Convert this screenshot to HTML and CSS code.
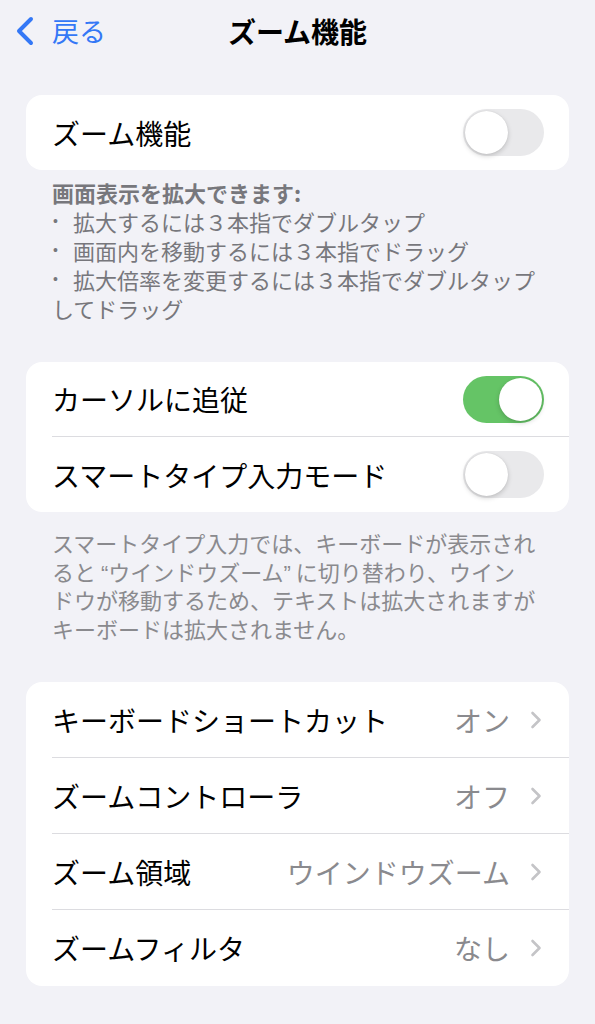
FILE: index.html
```html
<!DOCTYPE html>
<html lang="ja">
<head>
    <meta charset="utf-8">
    <title>ズーム機能</title>
    <link rel="stylesheet" href="styles.css">
</head>
<body>
    <header class="nav">
        <a class="back" href="#">
            <svg class="back-icon" width="20" height="30" viewBox="0 0 20 30">
                <path d="M17 3 L5 15 L17 27" fill="none" stroke="#3478f6" stroke-width="4" stroke-linecap="round" stroke-linejoin="round"/>
            </svg>
            <span>戻る</span>
        </a>
        <h1 class="title">ズーム機能</h1>
    </header>

    <section class="card first">
        <div class="row">
            <span class="label">ズーム機能</span>
            <span class="toggle"></span>
        </div>
    </section>

    <div class="desc">
        <p class="desc-head">画面表示を拡大できます:</p>
        <p><span class="bullet">•</span>拡大するには３本指でダブルタップ</p>
        <p><span class="bullet">•</span>画面内を移動するには３本指でドラッグ</p>
        <p><span class="bullet">•</span>拡大倍率を変更するには３本指でダブルタップしてドラッグ</p>
    </div>

    <section class="card second">
        <div class="row">
            <span class="label">カーソルに追従</span>
            <span class="toggle on"></span>
        </div>
        <div class="row">
            <span class="label">スマートタイプ入力モード</span>
            <span class="toggle"></span>
        </div>
    </section>

    <p class="footer">スマートタイプ入力では、キーボードが表示され<br>ると <span class="q">“</span>ウインドウズーム<span class="q">”</span> に切り替わり、ウイン<br>ドウが移動するため、テキストは拡大されますが<br>キーボードは拡大されません。</p>

    <section class="card third">
        <div class="row link">
            <span class="label">キーボードショートカット</span>
            <span class="value">オン</span>
            <svg class="chev" width="12" height="18" viewBox="0 0 12 18"><path d="M2.5 2 L9.5 9 L2.5 16" fill="none" stroke="#c4c4c7" stroke-width="2.6" stroke-linecap="round" stroke-linejoin="round"/></svg>
        </div>
        <div class="row link">
            <span class="label">ズームコントローラ</span>
            <span class="value">オフ</span>
            <svg class="chev" width="12" height="18" viewBox="0 0 12 18"><path d="M2.5 2 L9.5 9 L2.5 16" fill="none" stroke="#c4c4c7" stroke-width="2.6" stroke-linecap="round" stroke-linejoin="round"/></svg>
        </div>
        <div class="row link">
            <span class="label">ズーム領域</span>
            <span class="value">ウインドウズーム</span>
            <svg class="chev" width="12" height="18" viewBox="0 0 12 18"><path d="M2.5 2 L9.5 9 L2.5 16" fill="none" stroke="#c4c4c7" stroke-width="2.6" stroke-linecap="round" stroke-linejoin="round"/></svg>
        </div>
        <div class="row link">
            <span class="label">ズームフィルタ</span>
            <span class="value">なし</span>
            <svg class="chev" width="12" height="18" viewBox="0 0 12 18"><path d="M2.5 2 L9.5 9 L2.5 16" fill="none" stroke="#c4c4c7" stroke-width="2.6" stroke-linecap="round" stroke-linejoin="round"/></svg>
        </div>
    </section>
</body>
</html>
```

FILE: styles.css
```css
body {
    margin: 0;
    background-color: #f2f2f7;
    font-family: "Noto Sans CJK JP", "Noto Sans", sans-serif;
    color: #000;
}
p {
    margin: 0;
}

.nav {
    position: relative;
    height: 62px;
    display: flex;
    align-items: center;
    justify-content: center;
}
.back {
    position: absolute;
    left: 14px;
    top: 16px;
    display: flex;
    align-items: center;
    gap: 18px;
    color: #3478f6;
    text-decoration: none;
    font-size: 27px;
    line-height: 30px;
}
.title {
    margin: 0;
    font-size: 28px;
    font-weight: 700;
    line-height: 62px;
}

.card {
    margin: 0 26px;
    background-color: #fff;
    border-radius: 16px;
    overflow: hidden;
}
.card.first {
    margin-top: 33px;
}
.card.second {
    margin-top: 39px;
}
.card.third {
    margin-top: 40px;
}

.row {
    height: 74px;
    margin-left: 26px;
    padding-right: 25px;
    display: flex;
    align-items: center;
    border-bottom: 1px solid #dcdce0;
}
.row:last-child {
    border-bottom: none;
    height: 75px;
}
.row.link {
    height: 75px;
    padding-right: 27px;
}
.row.link:last-child {
    height: 76px;
}
.label {
    flex: 1;
    font-size: 28px;
    line-height: 36px;
}
.value {
    font-size: 28px;
    line-height: 36px;
    color: #8a8a8e;
    margin-right: 20px;
}

.toggle {
    position: relative;
    width: 81px;
    height: 47px;
    border-radius: 24px;
    background-color: #e9e9eb;
}
.toggle::after {
    content: "";
    position: absolute;
    left: 2px;
    top: 2px;
    width: 43px;
    height: 43px;
    border-radius: 50%;
    background-color: #fff;
    box-shadow: 0 2px 5px rgba(0, 0, 0, 0.18), 0 0 1px rgba(0, 0, 0, 0.12);
}
.toggle.on {
    background-color: #65c466;
}
.toggle.on::after {
    left: 36px;
}

.desc {
    margin-top: 8px;
    padding: 0 52px;
    font-size: 22px;
    line-height: 29px;
    color: #77777c;
}
.desc-head {
    font-weight: 700;
}
.bullet {
    display: inline-block;
    width: 21px;
    font-family: "Liberation Sans", sans-serif;
    font-size: 14px;
    line-height: 29px;
    vertical-align: top;
    padding-left: 1px;
    box-sizing: border-box;
}

.footer {
    margin-top: 16px;
    padding: 0 52px;
    font-size: 22px;
    line-height: 28.5px;
    color: #8a8a8e;
}
.q {
    font-family: "Liberation Sans", sans-serif;
    line-height: 0;
}
```
